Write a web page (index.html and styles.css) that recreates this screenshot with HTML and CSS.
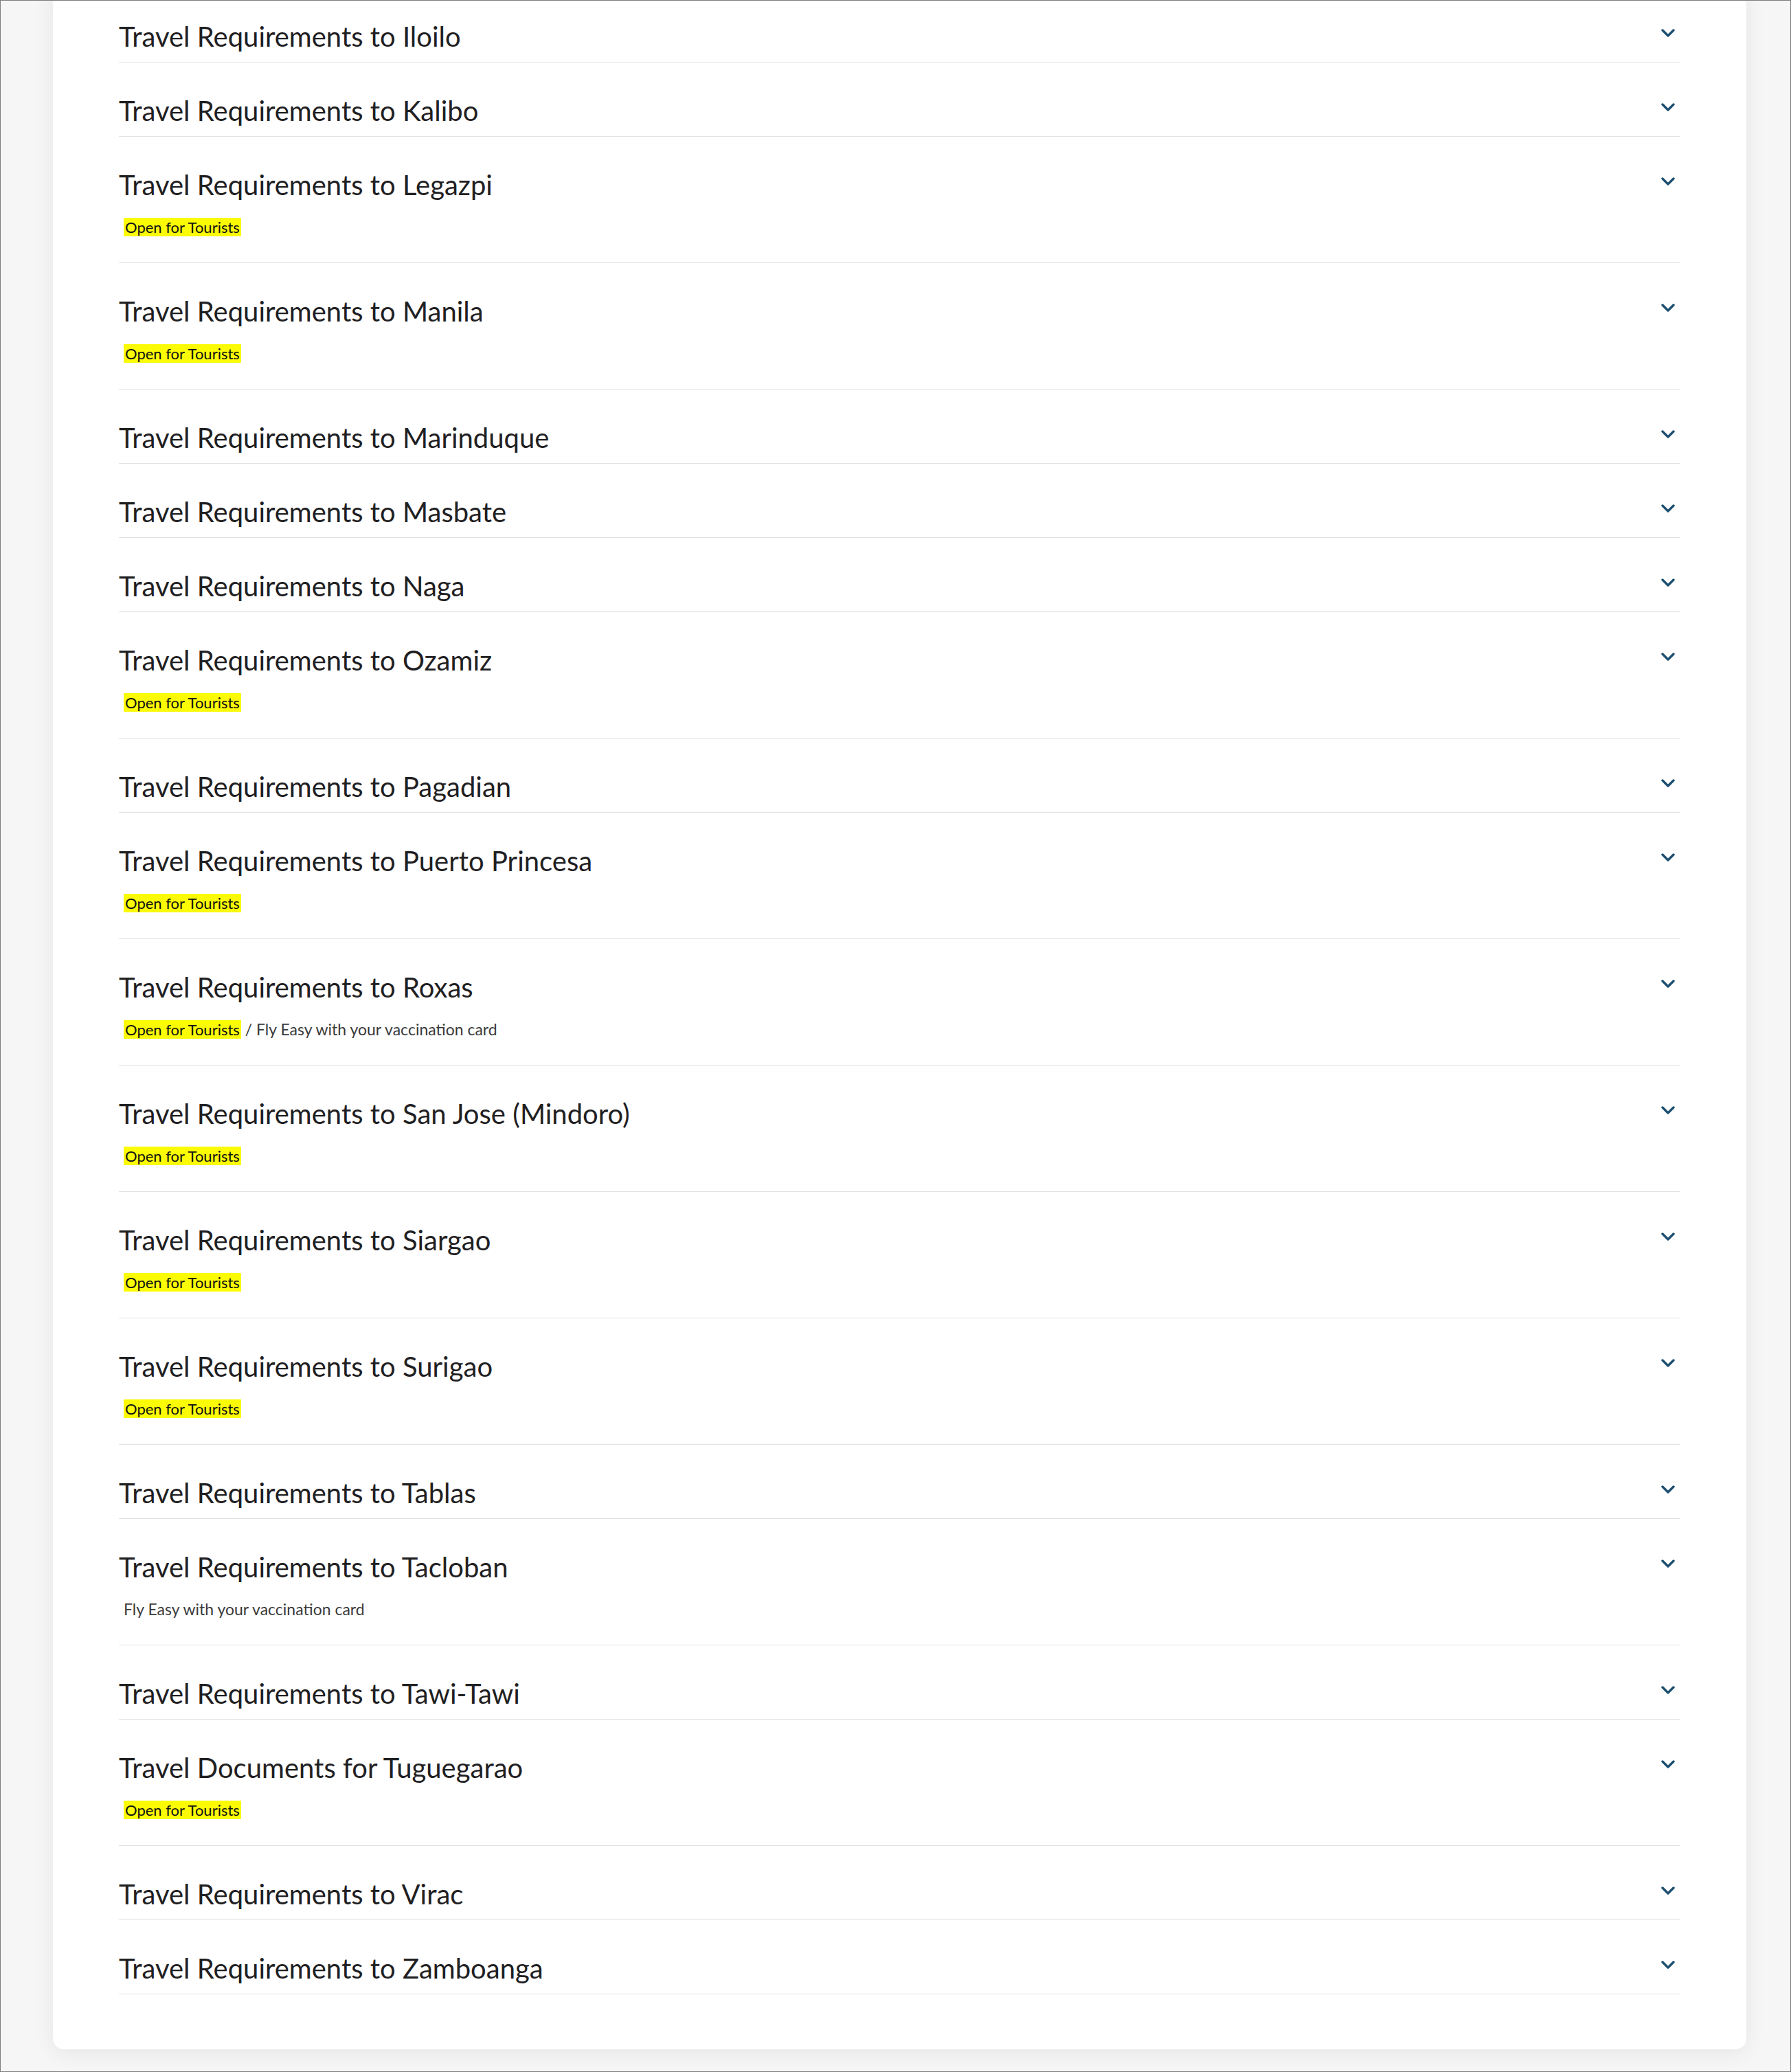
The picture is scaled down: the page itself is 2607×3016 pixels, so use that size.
FILE: index.html
```html
<!DOCTYPE html>
<html lang="en">
<head>
<meta charset="utf-8">
<title>Travel Requirements</title>
<link rel="stylesheet" href="styles.css">
</head>
<body>
<div class="frame">
  <div class="card">
    <div class="item"><div class="head"><span class="title">Travel Requirements to Iloilo</span><svg class="chev" viewBox="0 0 22 12" width="22" height="12"><polyline points="3,2 11,10 19,2"/></svg></div></div>
    <div class="item"><div class="head"><span class="title">Travel Requirements to Kalibo</span><svg class="chev" viewBox="0 0 22 12" width="22" height="12"><polyline points="3,2 11,10 19,2"/></svg></div></div>
    <div class="item has-sub"><div class="head"><span class="title">Travel Requirements to Legazpi</span><svg class="chev" viewBox="0 0 22 12" width="22" height="12"><polyline points="3,2 11,10 19,2"/></svg></div><div class="sub"><span class="badge">Open for Tourists</span></div></div>
    <div class="item has-sub"><div class="head"><span class="title">Travel Requirements to Manila</span><svg class="chev" viewBox="0 0 22 12" width="22" height="12"><polyline points="3,2 11,10 19,2"/></svg></div><div class="sub"><span class="badge">Open for Tourists</span></div></div>
    <div class="item"><div class="head"><span class="title">Travel Requirements to Marinduque</span><svg class="chev" viewBox="0 0 22 12" width="22" height="12"><polyline points="3,2 11,10 19,2"/></svg></div></div>
    <div class="item"><div class="head"><span class="title">Travel Requirements to Masbate</span><svg class="chev" viewBox="0 0 22 12" width="22" height="12"><polyline points="3,2 11,10 19,2"/></svg></div></div>
    <div class="item"><div class="head"><span class="title">Travel Requirements to Naga</span><svg class="chev" viewBox="0 0 22 12" width="22" height="12"><polyline points="3,2 11,10 19,2"/></svg></div></div>
    <div class="item has-sub"><div class="head"><span class="title">Travel Requirements to Ozamiz</span><svg class="chev" viewBox="0 0 22 12" width="22" height="12"><polyline points="3,2 11,10 19,2"/></svg></div><div class="sub"><span class="badge">Open for Tourists</span></div></div>
    <div class="item"><div class="head"><span class="title">Travel Requirements to Pagadian</span><svg class="chev" viewBox="0 0 22 12" width="22" height="12"><polyline points="3,2 11,10 19,2"/></svg></div></div>
    <div class="item has-sub"><div class="head"><span class="title">Travel Requirements to Puerto Princesa</span><svg class="chev" viewBox="0 0 22 12" width="22" height="12"><polyline points="3,2 11,10 19,2"/></svg></div><div class="sub"><span class="badge">Open for Tourists</span></div></div>
    <div class="item has-sub"><div class="head"><span class="title">Travel Requirements to Roxas</span><svg class="chev" viewBox="0 0 22 12" width="22" height="12"><polyline points="3,2 11,10 19,2"/></svg></div><div class="sub"><span class="badge">Open for Tourists</span><span class="note"> / Fly Easy with your vaccination card</span></div></div>
    <div class="item has-sub"><div class="head"><span class="title">Travel Requirements to San Jose (Mindoro)</span><svg class="chev" viewBox="0 0 22 12" width="22" height="12"><polyline points="3,2 11,10 19,2"/></svg></div><div class="sub"><span class="badge">Open for Tourists</span></div></div>
    <div class="item has-sub"><div class="head"><span class="title">Travel Requirements to Siargao</span><svg class="chev" viewBox="0 0 22 12" width="22" height="12"><polyline points="3,2 11,10 19,2"/></svg></div><div class="sub"><span class="badge">Open for Tourists</span></div></div>
    <div class="item has-sub"><div class="head"><span class="title">Travel Requirements to Surigao</span><svg class="chev" viewBox="0 0 22 12" width="22" height="12"><polyline points="3,2 11,10 19,2"/></svg></div><div class="sub"><span class="badge">Open for Tourists</span></div></div>
    <div class="item"><div class="head"><span class="title">Travel Requirements to Tablas</span><svg class="chev" viewBox="0 0 22 12" width="22" height="12"><polyline points="3,2 11,10 19,2"/></svg></div></div>
    <div class="item has-sub"><div class="head"><span class="title">Travel Requirements to Tacloban</span><svg class="chev" viewBox="0 0 22 12" width="22" height="12"><polyline points="3,2 11,10 19,2"/></svg></div><div class="sub"><span class="note">Fly Easy with your vaccination card</span></div></div>
    <div class="item"><div class="head"><span class="title">Travel Requirements to Tawi-Tawi</span><svg class="chev" viewBox="0 0 22 12" width="22" height="12"><polyline points="3,2 11,10 19,2"/></svg></div></div>
    <div class="item has-sub"><div class="head"><span class="title">Travel Documents for Tuguegarao</span><svg class="chev" viewBox="0 0 22 12" width="22" height="12"><polyline points="3,2 11,10 19,2"/></svg></div><div class="sub"><span class="badge">Open for Tourists</span></div></div>
    <div class="item"><div class="head"><span class="title">Travel Requirements to Virac</span><svg class="chev" viewBox="0 0 22 12" width="22" height="12"><polyline points="3,2 11,10 19,2"/></svg></div></div>
    <div class="item"><div class="head"><span class="title">Travel Requirements to Zamboanga</span><svg class="chev" viewBox="0 0 22 12" width="22" height="12"><polyline points="3,2 11,10 19,2"/></svg></div></div>
  </div>
</div>
</body>
</html>
```

FILE: styles.css
```css
html, body {
  margin: 0;
  padding: 0;
}
body {
  font-family: "Lato", "Liberation Sans", sans-serif;
  color: #222;
}
.frame {
  box-sizing: border-box;
  width: 2607px;
  height: 3016px;
  border: 1px solid #7d7d7d;
  background: #f6f6f6;
  overflow: hidden;
}
.card {
  box-sizing: border-box;
  width: 2465px;
  margin: -18px 0 0 76px;
  padding: 0 96px 80px;
  background: #fff;
  border-radius: 0 0 16px 16px;
  box-shadow: 0 6px 30px rgba(0, 0, 0, 0.07);
}
.item {
  box-sizing: border-box;
  height: 108px;
  padding: 46px 0 13px;
  border-bottom: 1px solid #e1e1e1;
}
.item.has-sub {
  height: 184px;
}
.head {
  display: flex;
  justify-content: space-between;
  align-items: flex-start;
  height: 48px;
}
.title {
  font-size: 40px;
  line-height: 48px;
  color: #1f2022;
}
.chev {
  margin: 13px 7px 0 0;
  flex: none;
}
.chev polyline {
  fill: none;
  stroke: #1d4f70;
  stroke-width: 3.4;
  stroke-linecap: round;
  stroke-linejoin: round;
}
.sub {
  margin-top: 24px;
  padding-left: 7px;
  height: 27px;
  font-size: 23px;
  line-height: 27px;
  white-space: nowrap;
}
.badge {
  display: inline-block;
  padding: 0 2px;
  font-size: 22px;
  background: #fbfb06;
  color: #111;
}
.note {
  color: #3a3a3a;
}
```
